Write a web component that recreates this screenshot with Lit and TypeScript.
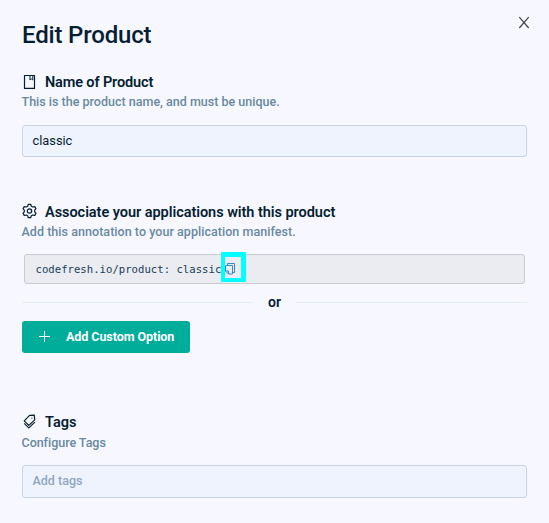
import { LitElement, html, css, svg } from "lit";
import { customElement, property } from "lit/decorators.js";

const icons = {
  book: svg`<path d="M2.5 2.5H12.5V15.4H2.5Z"/><path d="M8 2.5V7L9.4 5.9L10.8 7V2.5" stroke-width="1"/>`,
  gear: svg`<path d="M6.3 1.3H8.7L9.3 3.2L10.8 4L12.8 3.6L14 5.7L12.7 7.2V8.8L14 10.3L12.8 12.4L10.8 12L9.3 12.8L8.7 14.7H6.3L5.7 12.8L4.2 12L2.2 12.4L1 10.3L2.3 8.8V7.2L1 5.7L2.2 3.6L4.2 4L5.7 3.2Z"/><circle cx="7.5" cy="8" r="2.2"/>`,
  tags: svg`<g transform="translate(0 .7)"><path d="M7.6 1.7L12.3 1.5L12.7 6.2L6.8 11.7L2.2 7.1Z"/><path d="M2.2 9.7L6.8 14.2L12.9 8.4"/><circle cx="9.9" cy="4.4" r=".65" fill="currentColor" stroke="none"/></g>`,
};

@customElement("form-section")
export class FormSection extends LitElement {
  @property() icon: keyof typeof icons = "book";
  @property() heading = "";
  @property() hint = "";

  static styles = css`
    :host { display: block; }
    .head { display: flex; align-items: flex-start; height: 20px; color: #051e33; }
    svg { width: 15px; height: 16px; margin: 1px 8px 0 0; fill: none; stroke: currentColor; stroke-width: 1.2; stroke-linejoin: round; }
    h2 { margin: 1px 0 0; font-size: 14.5px; line-height: 20px; font-weight: 600; white-space: nowrap; letter-spacing: var(--head-spacing, 0); }
    .hint { margin: var(--hint-top, 2px) 0 0 -0.5px; height: 15px; font-size: 12.5px; line-height: 16px; font-weight: 500; color: #6889a0; white-space: nowrap; letter-spacing: var(--hint-spacing, 0); }
  `;

  render() {
    return html`
      <div class="head"><svg viewBox="0 0 15 16">${icons[this.icon]}</svg><h2>${this.heading}</h2></div>
      <div class="hint">${this.hint}</div>
      <slot></slot>
    `;
  }
}

@customElement("app-root")
export class AppRoot extends LitElement {
  static styles = css`
    :host { display: block; box-sizing: border-box; height: 523px; overflow: hidden; padding: 15px 22px 0; background: #f7f8ff; color: #051e33; font-family: Roboto, "Liberation Sans", sans-serif; }
    header { display: flex; justify-content: space-between; height: 57px; }
    h1 { margin: 6px 0 0; font-size: 24px; line-height: 28px; font-weight: 500; letter-spacing: -0.17px; }
    .close { width: 12px; height: 13px; margin: 1px -3px 0 0; fill: none; stroke: #404549; stroke-width: 1.25; }
    .name { height: 130px; --head-spacing: -0.14px; --hint-spacing: 0.01px; }
    .associate { height: 210px; --head-spacing: -0.045px; --hint-spacing: 0.045px; }
    .tags { --hint-spacing: -0.03px; --hint-top: 3px; }
    .field { box-sizing: border-box; height: 32px; margin-top: 16px; padding: 0 9.5px; border: 1px solid #c6d4e4; border-radius: 3px; background: #eef3fe; font-size: 12.8px; line-height: 30px; font-weight: 450; }
    .tags .field { height: 33px; margin-top: 15px; color: #91a5bf; font-size: 12.5px; font-weight: 500; }
    .code { box-sizing: border-box; display: flex; align-items: center; height: 30px; margin: 15px 2px 0; padding-left: 10.5px; border: 1px solid #cacbcf; border-radius: 3px; background: #ebecf1; color: #173c5a; font: 10.62px "DejaVu Sans Mono", monospace; letter-spacing: 0.02px; white-space: pre; }
    .copy { box-sizing: border-box; flex: none; display: flex; width: 25px; height: 30px; margin: -4px 0 0 0; border: solid #00ffff; border-width: 5px 5px 4px 4px; border-radius: 1px; }
    .copy svg { flex: none; width: 11px; height: 13px; margin: 5px 0 0 0; fill: none; stroke: #3787d5; stroke-width: 1; }
    .or { display: flex; align-items: center; height: 18px; margin: 9px 0 10px; font-size: 14px; line-height: 18px; font-weight: 600; gap: 15px; }
    .or::before, .or::after { content: ""; flex: 1; height: 1px; background: #e3edf8; }
    button { display: flex; align-items: center; width: 168px; height: 32px; padding: 0 0 0 17px; border: 0; border-radius: 3px; background: #00ad9b; color: #fff; font: 700 12.5px/32px Roboto, sans-serif; letter-spacing: -0.07px; white-space: nowrap; }
    button svg { width: 11px; height: 11px; margin: -1px 16px 0 0; stroke: #fff; stroke-width: 1; }
  `;

  render() {
    return html`
      <header>
        <h1>Edit Product</h1>
        <svg class="close" viewBox="0 0 12 13"><path d="M1.3 1.2L10.7 12M10.7 1.2L1.3 12"/></svg>
      </header>
      <form-section class="name" icon="book" heading="Name of Product" hint="This is the product name, and must be unique.">
        <div class="field">classic</div>
      </form-section>
      <form-section class="associate" icon="gear" heading="Associate your applications with this product" hint="Add this annotation to your application manifest.">
        <div class="code">codefresh.io/product: classic<span class="copy"><svg viewBox="0 0 11 13"><path d="M2.5 3.5V1.5H9.5V10.5H7.5M.5 3.5H7.5V12H3.5L.5 9ZM.5 9H3.5V12"/></svg></span></div>
        <div class="or">or</div>
        <button><svg viewBox="0 0 11 11"><path d="M5.5 0V11M0 5.5H11"/></svg>Add Custom Option</button>
      </form-section>
      <form-section class="tags" icon="tags" heading="Tags" hint="Configure Tags">
        <div class="field">Add tags</div>
      </form-section>
    `;
  }
}
